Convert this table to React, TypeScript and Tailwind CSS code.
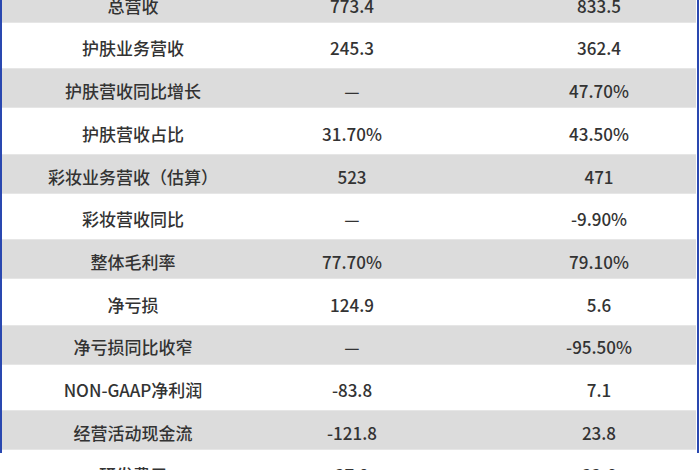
const rows: [string, string, string][] = [
  ['总营收', '773.4', '833.5'],
  ['护肤业务营收', '245.3', '362.4'],
  ['护肤营收同比增长', '—', '47.70%'],
  ['护肤营收占比', '31.70%', '43.50%'],
  ['彩妆业务营收（估算）', '523', '471'],
  ['彩妆营收同比', '—', '-9.90%'],
  ['整体毛利率', '77.70%', '79.10%'],
  ['净亏损', '124.9', '5.6'],
  ['净亏损同比收窄', '—', '-95.50%'],
  ['NON-GAAP净利润', '-83.8', '7.1'],
  ['经营活动现金流', '-121.8', '23.8'],
  ['研发费用', '27.9', '22.6'],
];

const App = () => {
  return (
    <div
      className="w-[700px] h-[470px] overflow-hidden bg-white"
      style={{ fontFamily: '"Noto Sans CJK SC", "Noto Sans", sans-serif' }}
    >
      <div className="w-[699px] h-full border-l-2 border-r-2 border-[#2a48b0] pr-[1px]">
        <div className="-mt-[17px] flex flex-col text-[17px] font-medium text-[#333333]">
          {rows.map(([name, a, b], i) => (
            <div
              key={name}
              className={`flex items-center pt-[5px] ${
                i % 2 === 0 ? 'h-[40px] bg-[#dcdcdc] border-y border-[#e6e6e6]' : 'h-[45.4px] bg-white'
              }`}
            >
              <div className="w-[262px] text-center">{name}</div>
              <div className="w-[176px] text-center">{a}</div>
              <div className="flex-1 text-center pl-[62px]">{b}</div>
            </div>
          ))}
        </div>
      </div>
    </div>
  );
};

export default App;
